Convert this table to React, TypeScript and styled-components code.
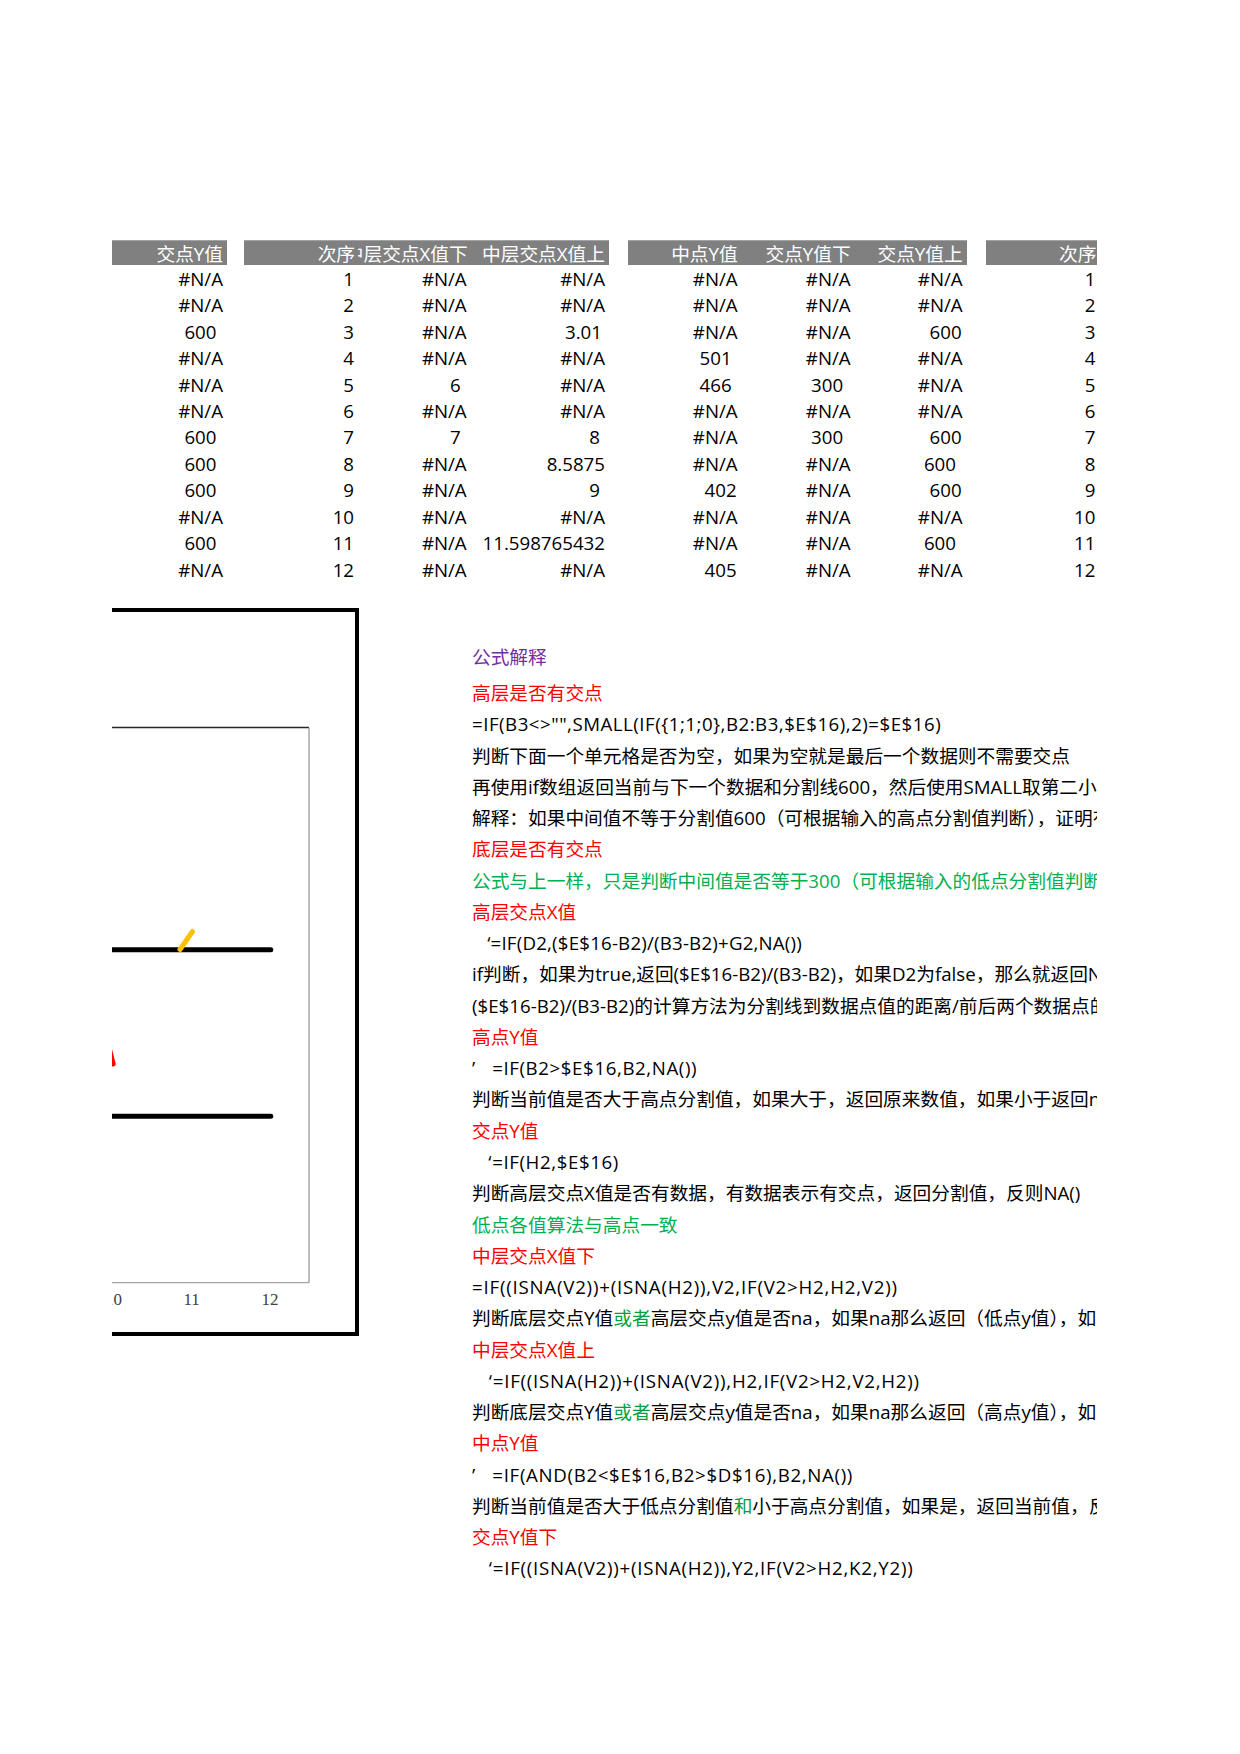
import React from "react";
import styled, { createGlobalStyle } from "styled-components";

const GlobalStyle = createGlobalStyle`
  html, body { margin: 0; padding: 0; background: #ffffff; }
  body { font-family: "Open Sans", "Noto Sans CJK SC", sans-serif; }
`;

const FONT = `"Open Sans", "Noto Sans CJK SC", sans-serif`;

const Page = styled.div`
  width: 1240px;
  min-height: 1754px;
  box-sizing: border-box;
  padding: 240px 0 0 112px;
  background: #fff;
`;

const Sheet = styled.div`
  width: 985px;
  overflow: hidden;
`;

const Table = styled.div`
  display: grid;
  grid-template-columns: 115px 17px 114px 112.7px 138.3px 19px 113.7px 113px 112px 19.3px 113.5px;
  grid-template-rows: 25px repeat(12, 26.45px);
  font-family: ${FONT};
  font-size: 18.7px;
`;

const HeadCell = styled.div<{ $pad?: number }>`
  background: #808080;
  box-shadow: inset 0 1px 0 #a3a3a3;
  color: #ffffff;
  display: flex;
  align-items: center;
  justify-content: flex-end;
  padding-top: 4px;
  padding-right: ${(p) => p.$pad ?? 4}px;
  box-sizing: border-box;
  overflow: hidden;
  white-space: nowrap;
  line-height: 1;
`;

const Blank = styled.div``;

const DataCell = styled.div<{ $shift: number }>`
  display: flex;
  align-items: center;
  justify-content: flex-end;
  padding-top: 2px;
  padding-right: ${(p) => 4 + p.$shift}px;
  box-sizing: border-box;
  color: #000;
  white-space: nowrap;
  line-height: 1;
`;

const Lower = styled.div`
  display: flex;
  align-items: flex-start;
  margin-top: 25.6px;
`;

const ChartBox = styled.div`
  flex-shrink: 0;
  width: 247px;
  height: 728px;
  box-sizing: border-box;
  border-top: 4px solid #000;
  border-right: 4px solid #000;
  border-bottom: 4px solid #000;
  overflow: hidden;
`;

const ChartSvg = styled.svg`
  display: block;
  overflow: hidden;
`;

const Notes = styled.div`
  margin-left: 113px;
  padding-top: 33.2px;
  width: 625px;
  overflow: hidden;
  font-family: ${FONT};
  font-size: 18.7px;
`;

type Tone = "title" | "head" | "note" | "body";

const toneColor: Record<Tone, string> = {
  title: "#7030a0",
  head: "#ff0000",
  note: "#00b050",
  body: "#000000",
};

const NoteLine = styled.div<{ $tone: Tone; $gap?: number; $track?: number }>`
  height: 31.28px;
  line-height: 31.28px;
  margin-bottom: ${(p) => p.$gap ?? 0}px;
  white-space: pre;
  letter-spacing: ${(p) => p.$track ?? 0}px;
  color: ${(p) => toneColor[p.$tone]};
`;

const Accent = styled.span`
  color: #00a040;
`;

type Cell = { v: string; s: number };
const c = (v: string | number, s = 0): Cell => ({ v: String(v), s });
const NA = c("#N/A");

const headers: (null | { t: string; pad?: number })[] = [
  { t: "交点Y值" },
  null,
  { t: "次序", pad: 3 },
  { t: "中层交点X值下", pad: 3 },
  { t: "中层交点X值上" },
  null,
  { t: "中点Y值" },
  { t: "交点Y值下" },
  { t: "交点Y值上" },
  null,
  { t: "次序", pad: 3 },
];

// columns: A, B(次序), C, D, E, F, G, H(次序)
const rows: Cell[][] = [
  [NA, c(1), NA, NA, NA, NA, NA, c(1)],
  [NA, c(2), NA, NA, NA, NA, NA, c(2)],
  [c(600, 6.5), c(3), NA, c("3.01", 3), NA, NA, c(600, 1), c(3)],
  [NA, c(4), NA, NA, c(501, 6), NA, NA, c(4)],
  [NA, c(5), c(6, 6), NA, c(466, 6), c(300, 7.5), NA, c(5)],
  [NA, c(6), NA, NA, NA, NA, NA, c(6)],
  [c(600, 6.5), c(7), c(7, 6), c(8, 5), NA, c(300, 7.5), c(600, 1), c(7)],
  [c(600, 6.5), c(8), NA, c("8.5875"), NA, NA, c(600, 6.7), c(8)],
  [c(600, 6.5), c(9), NA, c(9, 5), c(402, 1), NA, c(600, 1), c(9)],
  [NA, c(10), NA, NA, NA, NA, NA, c(10)],
  [c(600, 6.5), c(11), NA, c("11.598765432"), NA, NA, c(600, 6.7), c(11)],
  [NA, c(12), NA, NA, c(405, 1), NA, NA, c(12)],
];

// a blank spacer track follows these data columns
const gapsAfter = new Set([0, 3, 6]);

type Note = { tone: Tone; text: React.ReactNode; gap?: number; track?: number };

const notes: Note[] = [
  { tone: "title", text: "公式解释", gap: 4.7 },
  { tone: "head", text: "高层是否有交点" },
  { tone: "body", text: '=IF(B3<>"",SMALL(IF({1;1;0},B2:B3,$E$16),2)=$E$16)', track: 0.5 },
  { tone: "body", text: "判断下面一个单元格是否为空，如果为空就是最后一个数据则不需要交点" },
  { tone: "body", text: "再使用if数组返回当前与下一个数据和分割线600，然后使用SMALL取第二小值" },
  { tone: "body", text: "解释：如果中间值不等于分割值600（可根据输入的高点分割值判断），证明有交点" },
  { tone: "head", text: "底层是否有交点" },
  { tone: "note", text: "公式与上一样，只是判断中间值是否等于300（可根据输入的低点分割值判断）" },
  { tone: "head", text: "高层交点X值" },
  { tone: "body", text: "   ‘=IF(D2,($E$16-B2)/(B3-B2)+G2,NA())", track: 0.2 },
  { tone: "body", text: "if判断，如果为true,返回($E$16-B2)/(B3-B2)，如果D2为false，那么就返回NA()" },
  { tone: "body", text: "($E$16-B2)/(B3-B2)的计算方法为分割线到数据点值的距离/前后两个数据点的距离" },
  { tone: "head", text: "高点Y值" },
  { tone: "body", text: "’   =IF(B2>$E$16,B2,NA())", track: 0.6 },
  { tone: "body", text: "判断当前值是否大于高点分割值，如果大于，返回原来数值，如果小于返回na" },
  { tone: "head", text: "交点Y值" },
  { tone: "body", text: "   ‘=IF(H2,$E$16)", track: 0.6 },
  { tone: "body", text: "判断高层交点X值是否有数据，有数据表示有交点，返回分割值，反则NA()" },
  { tone: "note", text: "低点各值算法与高点一致" },
  { tone: "head", text: "中层交点X值下" },
  { tone: "body", text: "=IF((ISNA(V2))+(ISNA(H2)),V2,IF(V2>H2,H2,V2))", track: 0.78 },
  {
    tone: "body",
    text: (
      <>
        判断底层交点Y值<Accent>或者</Accent>高层交点y值是否na，如果na那么返回（低点y值），如果不是则返回较小值
      </>
    ),
  },
  { tone: "head", text: "中层交点X值上" },
  { tone: "body", text: "   ‘=IF((ISNA(H2))+(ISNA(V2)),H2,IF(V2>H2,V2,H2))", track: 0.75 },
  {
    tone: "body",
    text: (
      <>
        判断底层交点Y值<Accent>或者</Accent>高层交点y值是否na，如果na那么返回（高点y值），如果不是则返回较大值
      </>
    ),
  },
  { tone: "head", text: "中点Y值" },
  { tone: "body", text: "’   =IF(AND(B2<$E$16,B2>$D$16),B2,NA())", track: 0.66 },
  {
    tone: "body",
    text: (
      <>
        判断当前值是否大于低点分割值<Accent>和</Accent>小于高点分割值，如果是，返回当前值，反之返回NA()
      </>
    ),
  },
  { tone: "head", text: "交点Y值下" },
  { tone: "body", text: "   ‘=IF((ISNA(V2))+(ISNA(H2)),Y2,IF(V2>H2,K2,Y2))", track: 0.75 },
];

function Chart() {
  return (
    <ChartBox>
      <ChartSvg width={243} height={720} viewBox="0 0 243 720">
        <line x1={-5} y1={115.5} x2={197} y2={115.5} stroke="#262626" strokeWidth={1.4} />
        <line x1={197} y1={115.5} x2={197} y2={670.7} stroke="#7f7f7f" strokeWidth={1} />
        <line x1={-5} y1={670.7} x2={197} y2={670.7} stroke="#8c8c8c" strokeWidth={1} />
        <line x1={-20} y1={337.8} x2={158.8} y2={337.8} stroke="#000" strokeWidth={5} strokeLinecap="round" />
        <line x1={-20} y1={504.2} x2={158.8} y2={504.2} stroke="#000" strokeWidth={5} strokeLinecap="round" />
        <line x1={68} y1={337.5} x2={80.5} y2={319.5} stroke="#ffc000" strokeWidth={5} strokeLinecap="round" />
        <line x1={1.2} y1={452} x2={-14} y2={392} stroke="#ff0000" strokeWidth={5} strokeLinecap="round" />
        <g fontFamily='"Liberation Serif", serif' fontSize={17} fill="#404040" textAnchor="middle">
          <text x={1.4} y={693}>10</text>
          <text x={79.7} y={693}>11</text>
          <text x={158} y={693}>12</text>
        </g>
      </ChartSvg>
    </ChartBox>
  );
}

export default function App() {
  return (
    <>
      <GlobalStyle />
      <Page>
        <Sheet>
          <Table>
            {headers.map((h, i) =>
              h ? (
                <HeadCell key={`h${i}`} $pad={h.pad}>
                  {h.t}
                </HeadCell>
              ) : (
                <Blank key={`h${i}`} />
              )
            )}
            {rows.map((row, r) =>
              row.flatMap((cell, ci) => {
                const out = [
                  <DataCell key={`r${r}c${ci}`} $shift={cell.s}>
                    {cell.v}
                  </DataCell>,
                ];
                if (gapsAfter.has(ci)) out.push(<Blank key={`r${r}g${ci}`} />);
                return out;
              })
            )}
          </Table>
          <Lower>
            <Chart />
            <Notes>
              {notes.map((n, i) => (
                <NoteLine key={i} $tone={n.tone} $gap={n.gap} $track={n.track}>
                  {n.text}
                </NoteLine>
              ))}
            </Notes>
          </Lower>
        </Sheet>
      </Page>
    </>
  );
}
